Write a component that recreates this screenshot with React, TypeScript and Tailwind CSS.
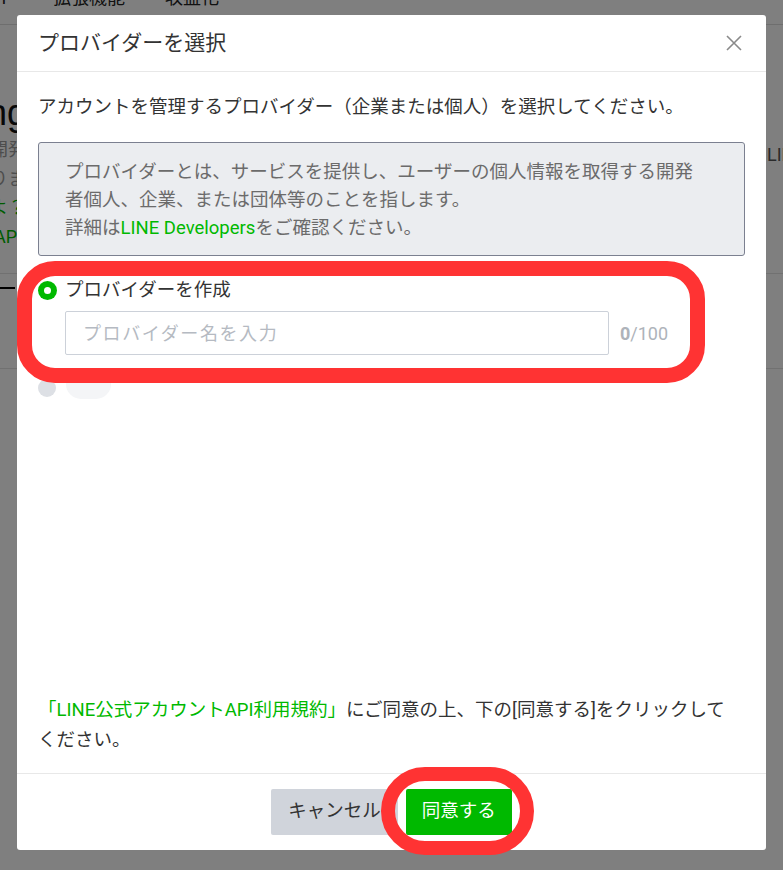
import React from "react";

export default function App() {
  return (
    <div className="relative h-[870px] w-[783px] overflow-hidden bg-white font-['Roboto','Noto_Sans_CJK_JP',sans-serif] text-[#333]">
      {/* background page */}
      <div className="flex flex-col">
        <div className="flex h-[25px] items-start overflow-hidden border-b border-[#dcdcdc] text-[18px] leading-[20px] text-[#222]">
          <span className="-ml-[4px] -mt-[12px]">n</span>
          <span className="ml-[47px] -mt-[12px]">拡張機能</span>
          <span className="ml-[40px] -mt-[12px]">収益化</span>
        </div>
        <div className="flex h-[248px] justify-between overflow-hidden">
          <div className="-ml-[10px] flex flex-col pt-[66px] whitespace-nowrap">
            <div className="-ml-[3px] font-['Liberation_Sans',sans-serif] text-[36px] leading-[44px] text-[#111]">ng</div>
            <div className="text-[18px] leading-[29px] text-[#9a9a9a]">開発者</div>
            <div className="text-[18px] leading-[29px] text-[#9a9a9a]">ります</div>
            <div className="text-[18px] leading-[29px] text-[#00b900]">よ？</div>
            <div className="ml-[4px] text-[18px] leading-[29px] text-[#00b900]">API</div>
          </div>
          <div className="w-[16px] overflow-hidden whitespace-nowrap pt-[116px] text-[18px] leading-[28px] text-[#555]">
            LINE
          </div>
        </div>
        <div className="h-[95px] border-t border-[#e2e2e2]">
          <div className="mt-[13px] h-[2px] w-[15px] bg-black" />
        </div>
        <div className="border-t border-[#e2e2e2]" />
      </div>

      {/* dim overlay */}
      <div className="absolute inset-0 bg-black/50" />

      {/* modal */}
      <div className="absolute left-[17px] top-[15px] flex h-[835px] w-[749px] flex-col rounded-[3px] bg-white">
        <div className="flex h-[57px] shrink-0 items-center justify-between border-b border-[#e8e8e8] pl-[21px] pr-[23px]">
          <div className="text-[21px] leading-[28px] text-[#333]">プロバイダーを選択</div>
          <svg width="18" height="18" viewBox="0 0 18 18">
            <path d="M2 2 L16 16 M16 2 L2 16" stroke="#8a8a8a" strokeWidth="1.6" fill="none" />
          </svg>
        </div>

        <div className="flex flex-1 flex-col px-[21px] pt-[21px]">
          <div className="text-[18.5px] leading-[28px] text-[#333]">
            アカウントを管理するプロバイダー（企業または個人）を選択してください。
          </div>
          <div className="mt-[21px] rounded-[3px] border border-[#7b8090] bg-[#ebedf0] pb-[13px] pl-[26px] pr-[20px] pt-[15px] text-[18.5px] leading-[28px] text-[#6b6b6b]">
            プロバイダーとは、サービスを提供し、ユーザーの個人情報を取得する開発
            <br />
            者個人、企業、または団体等のことを指します。
            <br />
            詳細は<span className="text-[#00b900]">LINE Developers</span>をご確認ください。
          </div>

          <div className="mt-[20px] flex items-center">
            <div className="flex h-[19px] w-[19px] items-center justify-center rounded-full bg-[#00b900]">
              <div className="h-[7px] w-[7px] rounded-full bg-white" />
            </div>
            <div className="ml-[8px] text-[18.5px] leading-[28px] text-[#333]">プロバイダーを作成</div>
          </div>

          <div className="mt-[7px] flex items-center pl-[27px]">
            <div className="flex h-[44px] w-[544px] items-center rounded-[2px] border border-[#ccd1d9] pl-[17px] text-[18px] tracking-[1.6px] text-[#b5bac2]">
              プロバイダー名を入力
            </div>
            <div className="ml-[11px] text-[18px] text-[#aeb3ba]">
              <span className="font-bold">0</span>/100
            </div>
          </div>

          <div className="mt-[14px] flex items-center">
            <div className="mt-[8px] h-[18px] w-[18px] rounded-full bg-[#dde0e5]" />
            <div className="ml-[10px] h-[30px] w-[45px] rounded-[15px] bg-[#f4f5f7]" />
          </div>

          <div className="flex-1" />

          <div className="pb-[18px] text-[18.5px] leading-[30px] text-[#333]">
            <span className="text-[#00b900]">「LINE公式アカウントAPI利用規約」</span>にご同意の上、下の[同意する]をクリックして
            <br />
            ください。
          </div>
        </div>

        <div className="flex shrink-0 justify-center gap-[8px] border-t border-[#e8e8e8] pb-[15px] pt-[15px]">
          <button className="h-[46px] rounded-[2px] bg-[#d0d4db] px-[17px] text-[18.5px] text-[#333]">
            キャンセル
          </button>
          <button className="h-[46px] rounded-[2px] bg-[#00b900] px-[16px] text-[18.5px] text-white">
            同意する
          </button>
        </div>
      </div>

      {/* red annotations */}
      <div className="absolute left-[17px] top-[261px] h-[122px] w-[688px] rounded-[38px] border-[15px] border-[#ff3333]" />
      <div className="absolute left-[381px] top-[767px] h-[88px] w-[153px] rounded-[44px] border-[14px] border-[#ff3333]" />
    </div>
  );
}
